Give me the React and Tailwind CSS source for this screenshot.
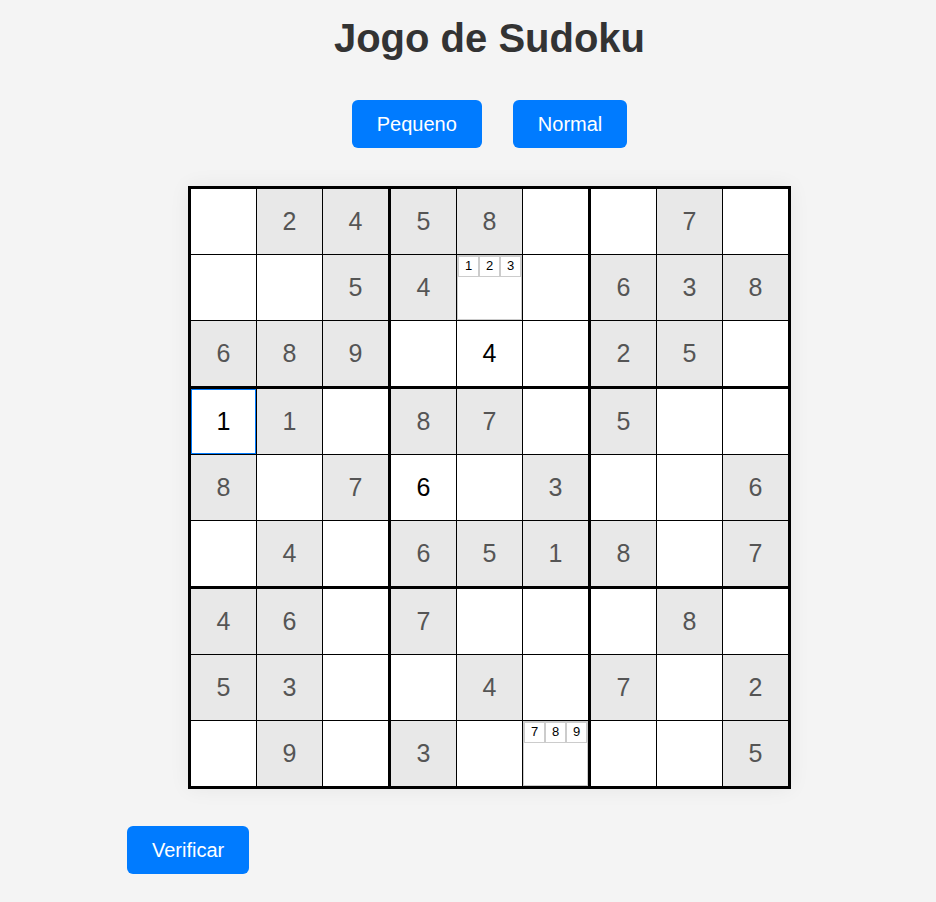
import { useState } from 'react';

const givens = [
  '.2458..7.',
  '..54..638',
  '689...25.',
  '.1.87.5..',
  '8.7..3..6',
  '.4.6518.7',
  '46.7...8.',
  '53..4.7.2',
  '.9.3....5',
];

const initialEntries = { '2-4': '4', '3-0': '1', '4-3': '6' };
const notes = { '1-4': [1, 2, 3], '8-5': [7, 8, 9] };

function Button({ children }) {
  return (
    <button
      type="button"
      className="h-12 cursor-pointer rounded-md bg-[#007bff] px-[25px] text-[20px] leading-6 text-white"
    >
      {children}
    </button>
  );
}

function Cell({ row, col, given, value, onChange }) {
  const key = `${row}-${col}`;
  const marks = notes[key];
  const selected = key === '3-0';
  const right = col === 8 ? 'border-r-0' : col % 3 === 2 ? 'border-r-3' : 'border-r';
  const bottom = row === 8 ? 'border-b-0' : row % 3 === 2 ? 'border-b-3' : 'border-b';

  return (
    <td className={`${right} ${bottom} border-black p-0`}>
      {marks ? (
        <div
          role="group"
          aria-label={`Notas da linha ${row + 1}, coluna ${col + 1}`}
          className="size-[65px] border border-[#ccc] bg-white"
        >
          <div className="grid grid-cols-3">
            {marks.map((n) => (
              <span
                key={n}
                className="h-[21px] border border-[#ccc] text-center text-[13px] leading-[18px] text-black"
              >
                {n}
              </span>
            ))}
          </div>
        </div>
      ) : (
        <input
          type="text"
          inputMode="numeric"
          maxLength={1}
          aria-label={`Linha ${row + 1}, coluna ${col + 1}`}
          value={given || value}
          readOnly={Boolean(given)}
          onChange={(e) => onChange(key, e.target.value)}
          className={`block size-[65px] rounded-none text-center text-[25px] outline-none ${
            given ? 'bg-[#e8e8e8] text-[#555]' : 'bg-white text-black'
          } ${selected ? 'border border-[#007bff]' : ''}`}
        />
      )}
    </td>
  );
}

export default function App() {
  const [entries, setEntries] = useState(initialEntries);
  const update = (key, value) => setEntries({ ...entries, [key]: value });

  return (
    <div className="min-h-screen bg-[#f4f4f4] pb-7 pl-[43px] font-['Liberation_Sans',Arial,sans-serif]">
      <main className="mx-auto max-w-[725px] pt-4">
        <h1 className="text-center text-[40px] leading-[44px] font-bold text-[#333]">Jogo de Sudoku</h1>
        <div className="mt-10 flex justify-center gap-[31px]">
          <Button>Pequeno</Button>
          <Button>Normal</Button>
        </div>
        <table className="mx-auto mt-[38px] border-separate border-spacing-0 border-3 border-black shadow-[0_0_20px_rgba(0,0,0,0.06)]">
          <tbody>
            {givens.map((line, row) => (
              <tr key={row}>
                {line.split('').map((char, col) => (
                  <Cell
                    key={col}
                    row={row}
                    col={col}
                    given={char === '.' ? '' : char}
                    value={entries[`${row}-${col}`] || ''}
                    onChange={update}
                  />
                ))}
              </tr>
            ))}
          </tbody>
        </table>
        <div className="mt-[37px] flex">
          <Button>Verificar</Button>
        </div>
      </main>
    </div>
  );
}
